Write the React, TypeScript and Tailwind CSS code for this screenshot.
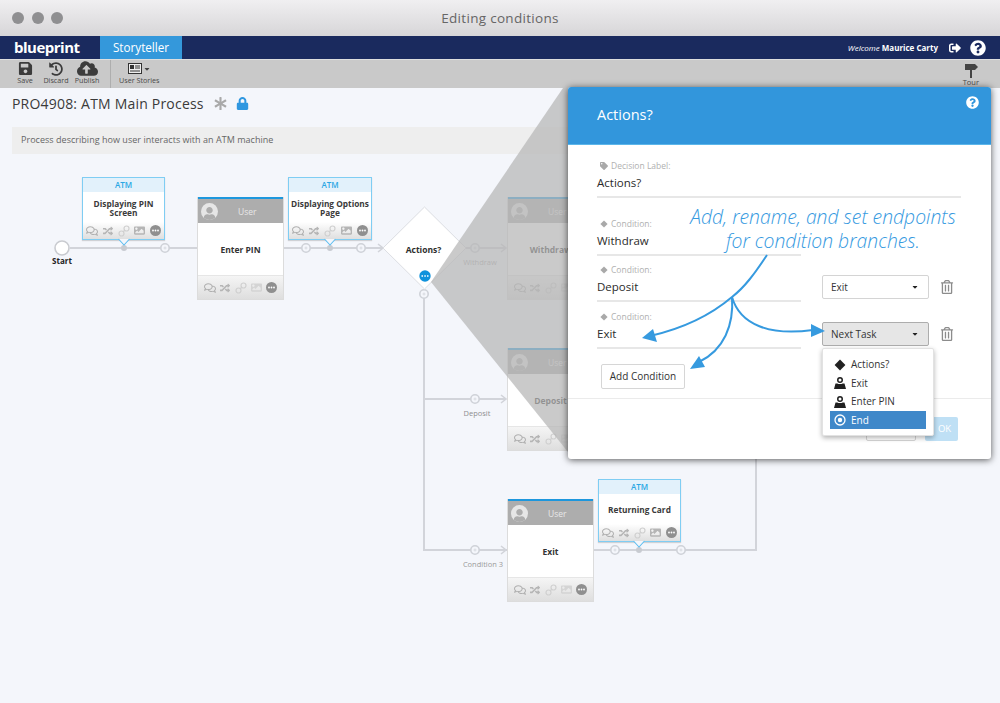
import {
  FaAsterisk,
  FaCaretDown,
  FaCloudUploadAlt,
  FaHistory,
  FaImage,
  FaLock,
  FaQuestionCircle,
  FaRandom,
  FaRegComments,
  FaRegTrashAlt,
  FaSave,
  FaSignOutAlt,
  FaTag,
  FaUser,
} from 'react-icons/fa';

function ToolButton({ label, icon, className }: { label: string; icon: React.ReactNode; className: string }) {
  return (
    <div className={`flex flex-col items-center pb-[2px] ${className}`}>
      <div className="flex h-[15px] items-center text-[#3c3c3c]">{icon}</div>
      <span className="text-[7.2px] leading-[9px] text-[#4a4a4a]">{label}</span>
    </div>
  );
}

function LinkIcon() {
  return (
    <svg width="12" height="12" viewBox="0 0 12 12" fill="none" stroke="#d0d0d0" strokeWidth="1.2">
      <circle cx="3.5" cy="8.5" r="2.5" />
      <circle cx="8.5" cy="3.5" r="2.5" />
      <path d="M5 7l2-2" />
    </svg>
  );
}

function MoreIcon() {
  return (
    <svg width="11" height="11" viewBox="0 0 11 11">
      <circle cx="5.5" cy="5.5" r="5.5" fill="#8f8f8f" />
      <circle cx="3" cy="5.5" r="0.9" fill="#fff" />
      <circle cx="5.5" cy="5.5" r="0.9" fill="#fff" />
      <circle cx="8" cy="5.5" r="0.9" fill="#fff" />
    </svg>
  );
}

function CardIcons({ imageClass }: { imageClass: string }) {
  return (
    <div className="flex h-full items-center justify-between px-[3px]">
      <FaRegComments size={12} className="text-[#b0b0b0]" />
      <FaRandom size={10} className="text-[#b5b5b5]" />
      <LinkIcon />
      <FaImage size={11} className={imageClass} />
      <MoreIcon />
    </div>
  );
}

function AtmCard({ title, className }: { title: string; className: string }) {
  return (
    <div className={`absolute flex h-[63px] flex-col border border-[#7fcdf3] bg-white shadow-[0_1px_1px_rgba(0,0,0,0.15)] ${className}`}>
      <div className="flex h-[14px] items-center justify-center bg-[#e2f1fb] pb-[1px] text-[8px] font-semibold text-[#2aa7e4]">ATM</div>
      <div className="flex flex-1 items-center justify-center px-[1px] pt-[3px] text-center text-[8.3px] font-bold leading-[8.5px] text-[#3a3a3a]">
        {title}
      </div>
      <div className="h-[17px] bg-gradient-to-b from-white to-[#dfdfdf]">
        <CardIcons imageClass="text-[#b5b5b5]" />
      </div>
    </div>
  );
}

function UserCard({ title, className }: { title: string; className: string }) {
  return (
    <div className={`absolute flex h-[103px] w-[87px] flex-col border border-[#dcdcdc] border-t-0 bg-white ${className}`}>
      <div className="flex h-[26px] items-center border-t-2 border-[#1d97dd] bg-[#adadad] pl-[3px]">
        <div className="flex h-[17px] w-[17px] items-end justify-center overflow-hidden rounded-full bg-[#e6e6e6]">
          <FaUser size={13} className="text-[#adadad]" />
        </div>
        <span className="ml-[20px] mt-[3px] text-[8.5px] text-[#e8e8e8]">User</span>
      </div>
      <div className="flex flex-1 items-center justify-center pt-[2px] text-[8.5px] font-bold text-[#333]">{title}</div>
      <div className="h-[24px] border-t border-[#e6e6e6] bg-gradient-to-b from-[#f5f5f5] to-[#dedede] px-[3px]">
        <CardIcons imageClass="text-[#d4d4d4]" />
      </div>
    </div>
  );
}

function Plus({ x, y }: { x: number; y: number }) {
  return (
    <g>
      <circle cx={x} cy={y} r="4.2" fill="#f4f6fb" stroke="#cfd2d8" strokeWidth="1.6" />
      <path d={`M${x - 1.5} ${y}h3M${x} ${y - 1.5}v3`} stroke="#cfd2d8" strokeWidth="0.7" />
    </g>
  );
}

function Pointer({ x, y }: { x: number; y: number }) {
  return (
    <g>
      <circle cx={x} cy={y} r="3" fill="#c8cbd1" />
      <path d={`M${x - 5.5} ${y - 9}L${x} ${y - 3}L${x + 5.5} ${y - 9}`} fill="#f4f6fb" stroke="#5cbdf0" strokeWidth="1.1" />
    </g>
  );
}

function Connectors() {
  return (
    <svg className="absolute left-0 top-0" width="1000" height="615" viewBox="0 88 1000 615" fill="none">
      <g stroke="#d2d4da" strokeWidth="2">
        <path d="M70 248H197M284 248H384M466 248H506M424 294V550H507M424 399H506M593 550H756V440" />
        <path d="M378 244l5 4l-5 4M501 244l5 4l-5 4M501 395l5 4l-5 4M501 546l5 4l-5 4" strokeWidth="1.6" />
      </g>
      <circle cx="62" cy="248" r="7" fill="#fff" stroke="#c9cbd0" strokeWidth="1.6" />
      <Plus x={165} y={248} />
      <Plus x={306} y={248} />
      <Plus x={361} y={248} />
      <Plus x={475} y={248} />
      <Plus x={475} y={399} />
      <Plus x={475} y={550} />
      <Plus x={615} y={550} />
      <Plus x={681} y={550} />
      <Plus x={424} y={294} />
      <text x="62" y="264" textAnchor="middle" fill="#222" fontSize="8" fontWeight="700">Start</text>
      <text x="480" y="265" textAnchor="middle" fill="#a9a9a9" fontSize="7.5">Withdraw</text>
      <text x="477" y="416" textAnchor="middle" fill="#8f8f8f" fontSize="7.5">Deposit</text>
      <text x="483" y="567" textAnchor="middle" fill="#9a9a9a" fontSize="7.5">Condition 3</text>
    </svg>
  );
}

function Diamond() {
  return (
    <svg className="absolute left-0 top-0" width="1000" height="615" viewBox="0 88 1000 615" fill="none">
      <path d="M424.5 207L466 248L424.5 289L383 248Z" fill="#fff" stroke="#dcdee3" strokeWidth="1" />
      <text x="423.5" y="253" textAnchor="middle" fill="#2e2e2e" fontSize="8.5" fontWeight="700">Actions?</text>
      <Pointer x={124} y={248} />
      <Pointer x={330} y={248} />
      <Pointer x={639} y={550} />
      <circle cx="425" cy="276" r="5.7" fill="#0f92dc" />
      <path d="M421.5 276h1.5M424.3 276h1.5M427 276h1.5" stroke="#fff" strokeWidth="1.6" />
    </svg>
  );
}

function Shade() {
  return (
    <svg className="absolute left-0 top-0" width="1000" height="615" viewBox="0 88 1000 615">
      <polygon points="431,282 563,88 568,88 568,452" fill="#b6b6b6" fillOpacity="0.73" />
    </svg>
  );
}

function CalloutArrows() {
  return (
    <svg className="absolute left-0 top-0" width="1000" height="703" viewBox="0 0 1000 703" fill="none">
      <g stroke="#369adf" strokeWidth="2">
        <path d="M767 255C755 273 745 287 732 297C712 314 685 328 650 336" />
        <path d="M732 297C734 325 724 350 699 362" />
        <path d="M732 297C740 325 770 336 813 330" />
      </g>
      <g fill="#369adf">
        <polygon points="642,338 653,329 657,342" />
        <polygon points="690,369 699,356 705,367" />
        <polygon points="825,331 811,324 811,337" />
      </g>
    </svg>
  );
}

function Field({ label, value, icon, className }: { label: string; value: string; icon: React.ReactNode; className: string }) {
  return (
    <div className={className}>
      <div className="flex h-[14px] items-center gap-[3px] text-[8.5px] text-[#b0b0b0]">
        <span className="flex w-[11px] justify-center pl-[3px] text-[#a9a9a9]">{icon}</span>
        {label}
      </div>
      <div className="flex h-[20px] items-center text-[11.5px] text-[#2b2b2b]">{value}</div>
      <div className="mt-[3px] h-[2px] bg-[#e7e7e7]" />
    </div>
  );
}

function DiamondGlyph({ size, color }: { size: number; color: string }) {
  return (
    <svg width={size} height={size} viewBox="0 0 10 10">
      <path d="M5 0.5L9.5 5L5 9.5L0.5 5Z" fill={color} />
    </svg>
  );
}

function SelectBox({ label, open }: { label: string; open?: boolean }) {
  return (
    <div
      className={`mt-[12px] flex h-[24px] w-[107px] items-center justify-between rounded-[2px] border pl-[8px] pr-[9px] text-[10px] text-[#333] ${
        open ? 'border-[#adadad] bg-[#e6e6e6]' : 'border-[#d4d4d4] bg-white'
      }`}
    >
      {label}
      <FaCaretDown size={8} className="text-[#222]" />
    </div>
  );
}

function Trash() {
  return <FaRegTrashAlt size={14} className="ml-[11px] mt-[17px] text-[#8c8c8c]" />;
}

function PersonGlyph() {
  return (
    <svg width="12" height="12" viewBox="0 0 12 12" fill="#1f1f1f">
      <path d="M6 0a3 3 0 1 0 0 6a3 3 0 1 0 0-6zM6 1.5a1.5 1.5 0 1 1 0 3a1.5 1.5 0 1 1 0-3z" />
      <path d="M1.5 6.5H3.5C4 7.2 8 7.2 8.5 6.5H10.5L12 12H0Z" />
    </svg>
  );
}

function Dropdown() {
  return (
    <div className="absolute left-[254px] top-[261px] h-[88px] w-[112px] rounded-[2px] border border-[#e2e2e2] bg-white px-[7px] pt-[6px] text-[10px] text-[#333] shadow-[0_2px_5px_rgba(0,0,0,0.3)]">
      <div className="flex h-[19px] items-center gap-[5px] pl-[4px]">
        <DiamondGlyph size={12} color="#222" />
        Actions?
      </div>
      <div className="flex h-[18px] items-center gap-[5px] pl-[4px]">
        <PersonGlyph />
        Exit
      </div>
      <div className="flex h-[19px] items-center gap-[5px] pl-[4px]">
        <PersonGlyph />
        Enter PIN
      </div>
      <div className="flex h-[18px] items-center gap-[5px] bg-[#3f88c9] pl-[4px] text-white">
        <svg width="12" height="12" viewBox="0 0 12 12" fill="none">
          <circle cx="6" cy="6" r="5" stroke="#fff" strokeWidth="1.3" />
          <circle cx="6" cy="6" r="2.2" fill="#fff" />
        </svg>
        End
      </div>
    </div>
  );
}

function Modal() {
  return (
    <div className="absolute left-[568px] top-[-1px] flex h-[372px] w-[423px] flex-col rounded-[3px] bg-white shadow-[0_1px_7px_rgba(0,0,0,0.65)]">
      <div className="relative flex h-[58px] items-center rounded-t-[3px] border-b border-[#5cb6ea] bg-[#3296dc] pb-[2px] pl-[29px] text-[14.5px] text-white">
        Actions?
        <FaQuestionCircle size={13} className="absolute right-[12px] top-[9px] text-white" />
      </div>
      <div className="flex-1 px-[29px] pt-[14px]">
        <Field label="Decision Label:" value="Actions?" icon={<FaTag size={8} />} className="w-[364px]" />
        <div className="mt-[19px]">
          <Field label="Condition:" value="Withdraw" icon={<DiamondGlyph size={8} color="#a9a9a9" />} className="w-[204px]" />
        </div>
        <div className="mt-[7px] flex">
          <Field label="Condition:" value="Deposit" icon={<DiamondGlyph size={8} color="#a9a9a9" />} className="mr-[21px] w-[204px]" />
          <SelectBox label="Exit" />
          <Trash />
        </div>
        <div className="mt-[8px] flex">
          <Field label="Condition:" value="Exit" icon={<DiamondGlyph size={8} color="#a9a9a9" />} className="mr-[21px] w-[204px]" />
          <SelectBox label="Next Task" open />
          <Trash />
        </div>
        <button className="ml-[4px] mt-[15px] flex h-[25px] w-[84px] items-center justify-center rounded-[2px] border border-[#d6d6d6] bg-white text-[10px] text-[#333]">
          Add Condition
        </button>
      </div>
      <div className="flex h-[61px] justify-end gap-[9px] border-t border-[#ebebeb] pr-[33px] pt-[18px]">
        <div className="h-[24px] w-[50px] rounded-[2px] border border-[#d6d6d6]" />
        <div className="flex h-[24px] w-[33px] items-center justify-center rounded-[2px] bg-[#bfe0f5] pl-[6px] text-[9.5px] text-white">OK</div>
      </div>
      <Dropdown />
      <div className="absolute left-[105px] top-[118px] w-[300px] text-center text-[19.35px] font-light italic leading-[24px] text-[#369adf]">
        Add, rename, and set endpoints
        <br />
        for condition branches.
      </div>
    </div>
  );
}

export default function App() {
  return (
    <div className="relative flex h-[703px] w-[1000px] flex-col overflow-hidden bg-[#f4f6fb] font-['Open_Sans',sans-serif]">
      <div className="relative flex h-[36px] items-center justify-center bg-gradient-to-b from-[#f0eff1] to-[#d7d6d8] text-[13.5px] tracking-[0.3px] text-[#666]">
        <div className="absolute left-[12px] top-[12px] flex gap-[7.5px]">
          <span className="h-[12px] w-[12px] rounded-full bg-[#8f8f91]" />
          <span className="h-[12px] w-[12px] rounded-full bg-[#8f8f91]" />
          <span className="h-[12px] w-[12px] rounded-full bg-[#8f8f91]" />
        </div>
        Editing conditions
      </div>

      <div className="flex h-[23px] items-center bg-[#1a2a5e] pl-[14px] pr-[14px]">
        <span className="w-[86px] text-[15px] font-bold leading-none tracking-[-0.5px] text-white">blueprint</span>
        <div className="flex h-full w-[82px] items-center justify-center bg-[#3498db] text-[11.7px] text-white">Storyteller</div>
        <div className="ml-auto flex items-center text-white">
          <span className="text-[8px] italic">Welcome</span>
          <span className="ml-[2px] text-[8px] font-bold">Maurice Carty</span>
          <FaSignOutAlt size={12} className="ml-[11px]" />
          <FaQuestionCircle size={16} className="ml-[9px]" />
        </div>
      </div>

      <div className="flex h-[29px] items-center border-t border-[#dedede] bg-[#c9c9c9]">
        <ToolButton label="Save" icon={<FaSave size={15} />} className="w-[22px] ml-[14px]" />
        <ToolButton label="Discard" icon={<FaHistory size={14} />} className="w-[30px] ml-[5px]" />
        <ToolButton label="Publish" icon={<FaCloudUploadAlt size={21} />} className="w-[28px] ml-[2px]" />
        <div className="ml-[9px] h-full w-px bg-[#aeaeae]" />
        <div className="ml-[8px] flex flex-col items-center pb-[2px]">
          <div className="flex h-[15px] items-center gap-[1px] text-[#444]">
            <svg width="14" height="11" viewBox="0 0 14 11">
              <rect x="0.5" y="0.5" width="13" height="10" fill="#eee" stroke="#333" />
              <rect x="2" y="2" width="4" height="4" fill="#333" />
              <path d="M7 3h5M7 5h5M2 8h10" stroke="#333" />
            </svg>
            <FaCaretDown size={8} />
          </div>
          <span className="text-[7.2px] leading-[9px] text-[#4a4a4a]">User Stories</span>
        </div>
        <div className="ml-auto mr-[21px] flex flex-col items-center">
          <svg width="14" height="15" viewBox="0 0 14 15" fill="#444">
            <path d="M1 1H11L14 4L11 7H1Z" />
            <rect x="6" y="7" width="2" height="8" />
          </svg>
          <span className="text-[7.5px] leading-[8px] text-[#4a4a4a]">Tour</span>
        </div>
      </div>

      <div className="relative flex-1">
        <div className="flex h-[30px] items-center gap-[9px] pl-[12px] text-[14px] tracking-[0.2px] text-[#3a3a3a]">
          PRO4908: ATM Main Process
          <FaAsterisk size={13} className="ml-[1px] text-[#a9a9a9]" />
          <FaLock size={13} className="text-[#2f97e0]" />
        </div>
        <div className="ml-[12px] mt-[9px] flex h-[27px] w-[556px] items-center bg-[#eeeeee] pb-[2px] pl-[9px] text-[9px] tracking-[0.03px] text-[#666]">
          Process describing how user interacts with an ATM machine
        </div>

        <Connectors />
        <AtmCard title="Displaying PIN Screen" className="left-[82px] top-[89px] w-[83px]" />
        <UserCard title="Enter PIN" className="left-[197px] top-[109px]" />
        <AtmCard title="Displaying Options Page" className="left-[288px] top-[89px] w-[84px]" />
        <UserCard title="Withdraw" className="left-[507px] top-[109px]" />
        <UserCard title="Deposit" className="left-[507px] top-[260px]" />
        <UserCard title="Exit" className="left-[507px] top-[411px]" />
        <AtmCard title="Returning Card" className="left-[598px] top-[391px] w-[83px]" />
        <Diamond />
        <Shade />
        <Modal />
      </div>
      <CalloutArrows />
    </div>
  );
}
